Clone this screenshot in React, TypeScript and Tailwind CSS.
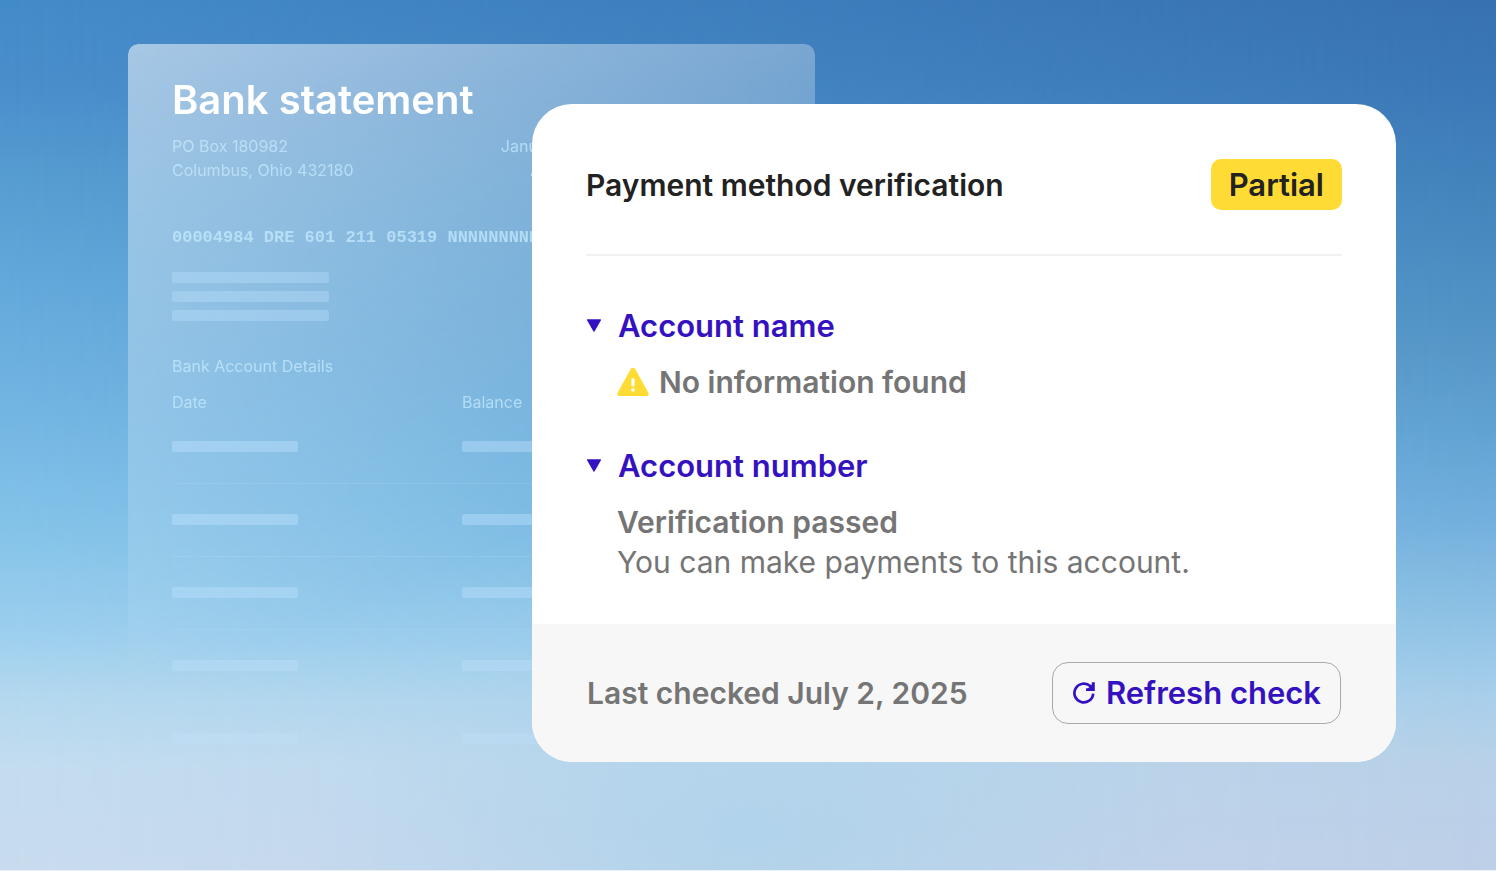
import React, { useState } from 'react';

const ROWS = [1, 2, 3, 4, 5];

const WarningIcon: React.FC = () => (
  <svg className="w-8 h-[30px] shrink-0" viewBox="0 0 32 30" aria-hidden="true">
    <path d="M13.6 2.2a2.8 2.8 0 0 1 4.8 0l13 23.6c.9 1.6 0 3.2-1.8 3.2H2.4C.6 29-.3 27.4.6 25.8z" fill="#ffdc35" />
    <path d="M16 12.5v5.5" stroke="#fff" strokeWidth="3" strokeLinecap="round" />
    <circle cx="16" cy="23" r="1.8" fill="#fff" />
  </svg>
);

const RefreshIcon: React.FC = () => (
  <svg className="w-6 h-6 shrink-0" viewBox="0 0 24 24" fill="none" aria-hidden="true">
    <path d="M21.2 12.6a9.4 9.4 0 1 1-3-7.5l1.5 1.5" stroke="#3512bf" strokeWidth="2.7" />
    <path d="M22.8 1.2v8.8h-8.8v-2.4l2.4-.6 3.4-3.4v-2.4z" fill="#3512bf" />
  </svg>
);

const BankStatement: React.FC = () => (
  <section className="col-start-1 col-span-2 row-start-1 rounded-t-[10px] px-11 pt-8 text-base text-[#c9ecff]/70 bg-[linear-gradient(158deg,rgba(255,255,255,0.53)_0px,rgba(255,255,255,0)_609px)] [mask-image:linear-gradient(#000_70%,rgba(0,0,0,0.6))]">
    <h1 className="text-[40px] leading-12 font-semibold text-white">Bank statement</h1>
    <div className="flex justify-between mt-2.5 leading-6">
      <p>PO Box 180982<br />Columbus, Ohio 432180</p>
      <p className="text-right mr-[188px]">January 31<br />Acct. 7</p>
    </div>
    <p className="mt-11 font-['Liberation_Mono',monospace] text-[17px] leading-6 font-bold whitespace-nowrap overflow-hidden">
      00004984 DRE 601 211 05319 NNNNNNNNNNN
    </p>
    <div className="flex flex-col gap-2 mt-[22px]">
      <div className="h-[11px] w-[157px] rounded-xs bg-[#bfe2ff]/35" />
      <div className="h-[11px] w-[157px] rounded-xs bg-[#bfe2ff]/35" />
      <div className="h-[11px] w-[157px] rounded-xs bg-[#bfe2ff]/35" />
    </div>
    <table className="w-full mt-[37px] table-fixed text-left leading-4">
      <caption className="text-left pb-5">Bank Account Details</caption>
      <thead>
        <tr>
          <th className="w-[290px] font-normal">Date</th>
          <th className="font-normal">Balance</th>
        </tr>
      </thead>
      <tbody>
        {ROWS.map(row => (
          <tr key={row} className="h-[73px] border-b border-white/8 last:border-0">
            <td><div className="h-[11px] w-[126px] rounded-xs bg-[#c4e4ff]/40" /></td>
            <td><div className="h-[11px] w-[126px] rounded-xs bg-[#c4e4ff]/40" /></td>
          </tr>
        ))}
      </tbody>
    </table>
  </section>
);

const Disclosure: React.FC<{ title: string; children: React.ReactNode }> = ({ title, children }) => {
  const [open, setOpen] = useState(true);

  return (
    <div>
      <button
        aria-expanded={open}
        onClick={() => setOpen(!open)}
        className="flex items-center gap-4 text-[31px] text-[#3512bf] font-semibold cursor-pointer"
      >
        <svg className={open ? 'w-4 h-3.5' : 'w-4 h-3.5 -rotate-90'} viewBox="0 0 16 14" aria-hidden="true">
          <path d="M1.7 1h12.6l-6.3 11z" fill="#3512bf" stroke="#3512bf" strokeWidth="1.5" strokeLinejoin="round" />
        </svg>
        {title}
      </button>
      {open && <div className="pl-[31px] mt-4">{children}</div>}
    </div>
  );
};

const VerificationCard: React.FC = () => (
  <section className="z-10 col-start-2 col-span-2 row-start-1 self-start mt-15 rounded-[40px] overflow-hidden bg-white text-[30px] leading-10 text-[#757575]">
    <div className="px-[54px] pt-[55px] pb-[42px]">
      <header className="flex items-center justify-between pb-11 border-b-2 border-[#f1f1f1] font-semibold text-[#222]">
        <h2>Payment method verification</h2>
        <span className="h-[51px] px-[18px] flex items-center rounded-[10px] bg-[#ffdc35] text-[31px]">Partial</span>
      </header>
      <div className="flex flex-col gap-11 mt-[50px]">
        <Disclosure title="Account name">
          <p className="flex items-center gap-2.5 font-semibold"><WarningIcon />No information found</p>
        </Disclosure>
        <Disclosure title="Account number">
          <p className="font-semibold">Verification passed</p>
          <p>You can make payments to this account.</p>
        </Disclosure>
      </div>
    </div>
    <footer className="flex items-center justify-between px-[55px] py-[38px] bg-[#f7f7f7] font-semibold">
      <p>Last checked July 2, 2025</p>
      <button className="flex items-center gap-2.5 h-[62px] px-[19px] rounded-2xl border border-[#aaa] text-[31px] text-[#3512bf] cursor-pointer">
        <RefreshIcon />
        Refresh check
      </button>
    </footer>
  </section>
);

const App: React.FC = () => (
  <main className="relative min-h-screen border-b border-[#e9f0f8] pl-32 pr-[100px] pt-11 pb-12 font-['Inter',sans-serif] bg-[linear-gradient(#3871b1_0%,#3b78b7_10%,#4688bf_25%,#5697c8_40%,#62a4d4_50%,#74b0de_60%,#8cc1e4_70%,#a8cfeb_80%,#b8d1e8_87%,#bed0e8_100%)]">
    {/* lighter sky that fades out towards the right edge */}
    <div className="absolute inset-0 bg-[linear-gradient(#438bc9_0%,#4a8fcb_10%,#559cd1_20%,#62a8da_32%,#70b3e1_45%,#7fbfe7_57%,#8cc7ea_65%,#9dcfee_73%,#b3d8ee_80%,#c3dcef_88%,#c8dbee_100%)] [mask-image:linear-gradient(to_right,#000,transparent)]" />
    {/* blue patch in the haze along the bottom */}
    <div className="absolute inset-0 bg-[radial-gradient(ellipse_30%_25%_at_50%_96%,rgba(168,210,235,0.65),rgba(168,210,235,0))]" />
    <div className="relative grid grid-cols-[404fr_283fr_581fr]">
      <BankStatement />
      <VerificationCard />
    </div>
  </main>
);

export default App;
